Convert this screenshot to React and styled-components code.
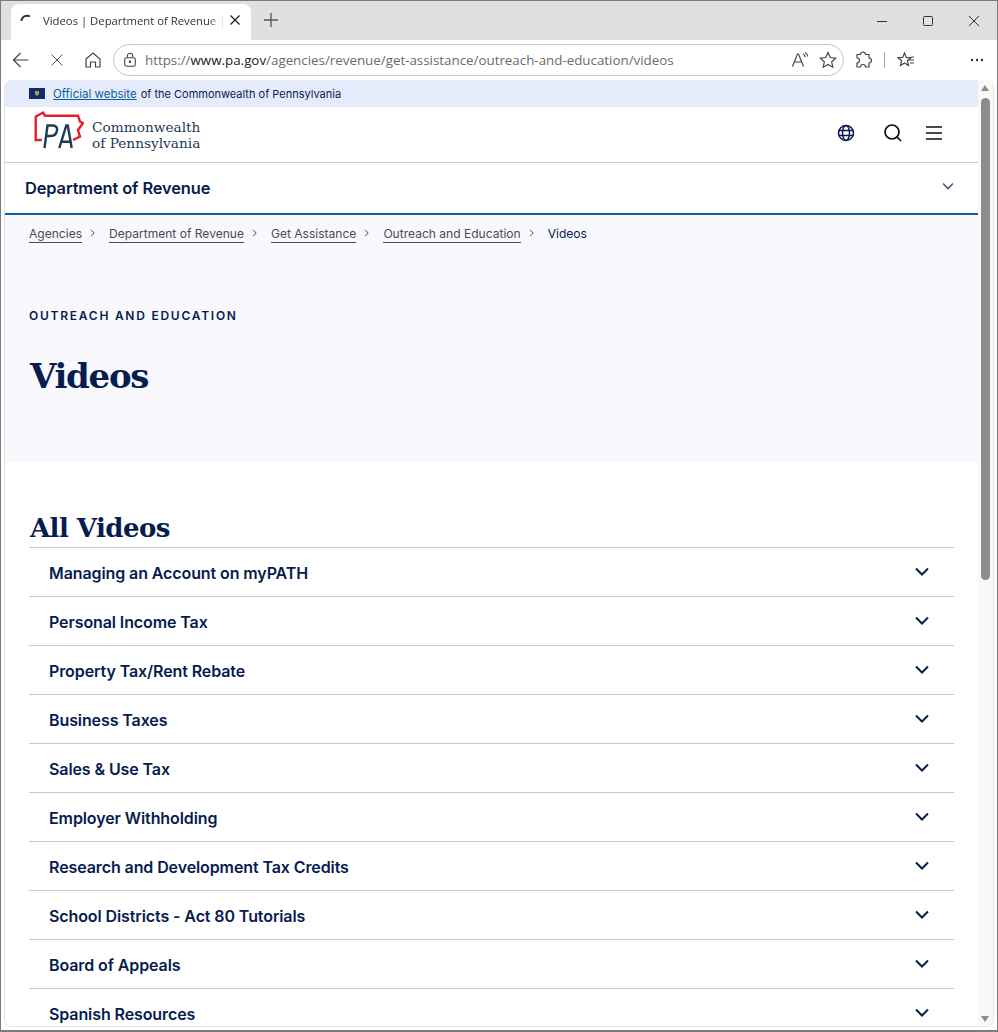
import React from "react";
import styled, { createGlobalStyle } from "styled-components";

const GlobalStyle = createGlobalStyle`
  html, body { margin: 0; padding: 0; background: #fff; }
  * { box-sizing: border-box; }
`;

const Frame = styled.div`
  width: 998px;
  height: 1032px;
  border: 1px solid #7b7b7b;
  border-bottom-width: 2px;
  background: #fff;
  display: flex;
  flex-direction: column;
  overflow: hidden;
  font-family: "Inter", "Liberation Sans", sans-serif;
`;

const TitleBar = styled.div`
  height: 39px;
  background: #e0e0e0;
  display: flex;
  align-items: flex-end;
  padding-left: 10px;
  flex: none;
`;

const Tab = styled.div`
  width: 240px;
  height: 36px;
  background: #fff;
  border-radius: 8px 8px 0 0;
  display: flex;
  align-items: center;
  padding: 0 10px 4px 8px;
  color: #333;
`;

const TabTitle = styled.span`
  flex: 1;
  margin-left: 8px;
  margin-right: 3px;
  font: 11.3px "Open Sans", "Liberation Sans", sans-serif;
  white-space: nowrap;
  overflow: hidden;
  mask-image: linear-gradient(to right, #000 90%, transparent);
`;

const NewTab = styled.div`
  margin-left: 12px;
  height: 36px;
  padding-bottom: 4px;
  display: flex;
  align-items: center;
`;

const WindowControls = styled.div`
  margin-left: auto;
  height: 39px;
  display: flex;
  align-items: center;
  gap: 30px;
  padding-right: 15px;
`;

const Toolbar = styled.div`
  height: 40px;
  flex: none;
  display: flex;
  align-items: center;
  padding-left: 10px;
  background: #fff;
`;

const ToolButton = styled.div`
  width: 20px;
  height: 20px;
  margin-right: ${(p) => p.$gap || 0}px;
  display: flex;
  align-items: center;
  justify-content: center;
  flex: none;
`;

const AddressBar = styled.div`
  width: 731px;
  height: 32px;
  border: 1px solid #c6c6c6;
  border-radius: 16px;
  display: flex;
  align-items: center;
  padding: 0 6px 0 8px;
  flex: none;
  margin-right: 9px;
`;

const Url = styled.span`
  margin-left: 7px;
  flex: 1;
  font: 13.35px "Open Sans", "Liberation Sans", sans-serif;
  color: #6b6b6b;
  white-space: nowrap;
  b { font-weight: 400; color: #222; }
`;

const AddressGap = styled.span`
  width: 10px;
  flex: none;
`;

const Divider = styled.div`
  width: 1px;
  height: 16px;
  background: #a9a9a9;
  margin: 0 11px;
  flex: none;
`;

const Viewport = styled.div`
  flex: 1;
  min-height: 0;
  margin: 0 3px 3px;
  display: flex;
  border: 1px solid #e4e4e4;
  border-top: 0;
  border-radius: 8px;
  overflow: hidden;
`;

const Page = styled.div`
  width: 973px;
  flex: none;
  overflow: hidden;
  color: #071c4f;
`;

const Scrollbar = styled.div`
  flex: 1;
  position: relative;
  background: #f8f8f8;
`;

const ScrollThumb = styled.div`
  position: absolute;
  top: 18px;
  left: 3px;
  width: 9px;
  height: 482px;
  border-radius: 5px;
  background: #8c8c8c;
`;

const ScrollArrow = styled.div`
  position: absolute;
  left: 3px;
  ${(p) => (p.$down ? "bottom: 4px;" : "top: 5px;")}
  width: 0;
  height: 0;
  border-left: 4.5px solid transparent;
  border-right: 4.5px solid transparent;
  ${(p) => (p.$down ? "border-top: 6px solid #8c8c8c;" : "border-bottom: 6px solid #8c8c8c;")}
`;

const Banner = styled.div`
  height: 27px;
  background: #e6ebfc;
  display: flex;
  align-items: center;
  padding-left: 24px;
  font-size: 11px;
  color: #071c4f;
`;

const OfficialLink = styled.a`
  margin: 0 4px 0 8px;
  font-size: 11.5px;
  color: #0a6299;
  text-decoration: underline;
`;

const Header = styled.header`
  height: 56px;
  border-bottom: 1px solid #c8c8d0;
  display: flex;
  align-items: center;
  padding: 0 35px 0 29px;
`;

const LogoMark = styled.svg`
  margin-bottom: 9px;
`;

const LogoText = styled.div`
  margin: 1px 0 0 8px;
  font: 13.7px/16px "DejaVu Serif", serif;
  color: #1f3a55;
  white-space: nowrap;
`;

const HeaderIcons = styled.div`
  margin: -3px 0 0 auto;
  display: flex;
  align-items: center;
`;

const HeaderIcon = styled.div`
  display: flex;
  margin-right: ${(p) => p.$gap || 0}px;
`;

const DeptBar = styled.div`
  height: 52px;
  border-bottom: 2px solid #0a6299;
  display: flex;
  align-items: center;
  justify-content: space-between;
  padding: 0 24px 0 20px;
  font-size: 16.4px;
  font-weight: 600;
  letter-spacing: -0.1px;
`;

const Hero = styled.section`
  height: 247px;
  background: #f8f8fd;
  padding: 9px 24px 0;
`;

const Crumbs = styled.nav`
  display: flex;
  align-items: center;
  height: 20px;
  font-size: 12.05px;
`;

const CrumbLink = styled.a`
  color: #4a4a5c;
  border-bottom: 1px solid #4a4a5c;
  line-height: 16px;
`;

const CrumbCurrent = styled.span`
  color: #071c4f;
  line-height: 16px;
`;

const CrumbSep = styled.span`
  width: 27px;
  padding-left: 8px;
  display: flex;
  margin-top: -3px;
`;

const Eyebrow = styled.div`
  margin-top: 64px;
  font-size: 12px;
  line-height: 16px;
  font-weight: 600;
  letter-spacing: 1.75px;
  text-transform: uppercase;
`;

const Title = styled.h1`
  margin: 30px 0 0 1px;
  font: 700 34px/44px "DejaVu Serif", serif;
  letter-spacing: -1.3px;
`;

const Main = styled.main`
  padding: 48px 24px 0;
`;

const SectionTitle = styled.h2`
  margin: 0 0 0 1px;
  font: 700 26px/37px "DejaVu Serif", serif;
  letter-spacing: -0.55px;
`;

const List = styled.div`
  border-top: 1px solid #c8c8d0;
`;

const Row = styled.div`
  height: 49px;
  border-bottom: 1px solid #c8c8d0;
  display: flex;
  align-items: center;
  justify-content: space-between;
  padding: 2px 25px 0 20px;
  font-size: 16px;
  font-weight: 600;
  letter-spacing: -0.1px;
`;

const RowChevron = styled.svg`
  margin-top: -3px;
`;

const DeptChevronMark = styled.svg`
  margin-top: -4px;
`;

const Chevron = () => (
  <RowChevron width="14" height="10" viewBox="0 0 14 10" fill="none">
    <path d="M1 1.5l6 6 6-6" stroke="#071c4f" strokeWidth="2" />
  </RowChevron>
);

const DeptChevron = () => (
  <DeptChevronMark width="12" height="8" viewBox="0 0 12 8" fill="none">
    <path d="M1 1.5l5 5 5-5" stroke="#4a5a75" strokeWidth="1.6" />
  </DeptChevronMark>
);

const SmallChevron = () => (
  <svg width="6" height="8" viewBox="0 0 6 8" fill="none">
    <path d="M1 .8L4.2 4 1 7.2" stroke="#4a4a5c" strokeWidth="1" />
  </svg>
);

const Stroke = ({ size = 18, sw = 1.2, color = "#444", children }) => (
  <svg width={size} height={size} viewBox="0 0 18 18" fill="none" stroke={color} strokeWidth={sw}>
    {children}
  </svg>
);

const Logo = () => (
  <LogoMark width="50" height="40" viewBox="0 0 50 40" fill="none">
    <path
      d="M7.7 30H1.7V6.6L9 2.5l2 3.2h33l2 6 3 1.3-5 7 2 6.7-7 3.3"
      stroke="#e2202c"
      strokeWidth="2.4"
    />
    <path d="M10.5 38l3-22.5h5c3.5 0 5 2 4.5 5-.6 3.5-3 5.5-6.5 5.5H12.5" stroke="#1f3a55" strokeWidth="2.4" />
    <path d="M25.3 38l7-22.5h1.5L37.7 38M27.5 31.7h9" stroke="#1f3a55" strokeWidth="2.4" />
  </LogoMark>
);

const Flag = () => (
  <svg width="16" height="11" viewBox="0 0 16 11">
    <rect width="16" height="11" fill="#14296b" />
    <path d="M6 3h4v3.5L8 8 6 6.500z" fill="#a89a4a" />
  </svg>
);

const videoTopics = [
  "Managing an Account on myPATH",
  "Personal Income Tax",
  "Property Tax/Rent Rebate",
  "Business Taxes",
  "Sales & Use Tax",
  "Employer Withholding",
  "Research and Development Tax Credits",
  "School Districts - Act 80 Tutorials",
  "Board of Appeals",
  "Spanish Resources",
];

const crumbs = ["Agencies", "Department of Revenue", "Get Assistance", "Outreach and Education"];

const App = () => (
  <Frame>
    <GlobalStyle />
    <TitleBar>
      <Tab>
        <svg width="16" height="16" viewBox="0 0 16 16" fill="none">
          <path d="M2.5 8C3.5 5 6.500 3.2 10 4" stroke="#333" strokeWidth="2.2" strokeLinecap="round" />
        </svg>
        <TabTitle>Videos | Department of Revenue | C</TabTitle>
        <svg width="12" height="12" viewBox="0 0 12 12" fill="none" stroke="#222" strokeWidth="1.3">
          <path d="M1.5 1.5l9 9M10.500 1.5l-9 9" />
        </svg>
      </Tab>
      <NewTab>
        <svg width="16" height="16" viewBox="0 0 16 16" fill="none" stroke="#555" strokeWidth="1.3">
          <path d="M8 1v14M1 8h14" />
        </svg>
      </NewTab>
      <WindowControls>
        <svg width="16" height="16" viewBox="0 0 16 16" fill="none" stroke="#333">
          <path d="M3 8.5h10" />
        </svg>
        <svg width="16" height="16" viewBox="0 0 16 16" fill="none" stroke="#333">
          <rect x="3.5" y="3.5" width="9" height="9" rx="1" />
        </svg>
        <svg width="16" height="16" viewBox="0 0 16 16" fill="none" stroke="#333">
          <path d="M3 3l10 10M13 3L3 13" />
        </svg>
      </WindowControls>
    </TitleBar>
    <Toolbar>
      <ToolButton $gap={16}>
        <Stroke>
          <path d="M16.5 9H1.5M8.5 2L1.5 9l7 7" />
        </Stroke>
      </ToolButton>
      <ToolButton $gap={16}>
        <Stroke size={14}>
          <path d="M2 2l14 14M16 2L2 16" />
        </Stroke>
      </ToolButton>
      <ToolButton $gap={10}>
        <Stroke>
          <path d="M2 8l7-6 7 6v8h-4.5v-5h-5v5H2z" />
        </Stroke>
      </ToolButton>
      <AddressBar>
        <Stroke size={16}>
          <rect x="3" y="6.5" width="12" height="9.5" rx="2" />
          <path d="M6 6.5V4.5a3 3 0 016 0v2" />
          <circle cx="9" cy="11" r=".8" fill="#444" />
        </Stroke>
        <Url>
          https://<b>www.pa.gov</b>/agencies/revenue/get-assistance/outreach-and-education/videos
        </Url>
        <Stroke>
          <path d="M1.5 15.5L6.5 3h1l5 12.5M3.5 11h7" />
          <path d="M12 3c1.2.5 2 1.5 2.2 3M14 1.5c1.5.7 2.5 2 2.8 4" />
        </Stroke>
        <AddressGap />
        <Stroke>
          <path d="M9 1.5l2.3 5 5.4.6-4 3.7 1.1 5.4L9 13.5l-4.8 2.7 1.1-5.4-4-3.7 5.4-.6z" />
        </Stroke>
      </AddressBar>
      <ToolButton>
        <Stroke>
          <path d="M6.5 3.5a2.5 2.5 0 015 0h3.5v3.5a2.5 2.5 0 010 5V16h-3.5a2.5 2.5 0 00-5 0H3v-4a2.5 2.5 0 000-5V3.5z" />
        </Stroke>
      </ToolButton>
      <Divider />
      <ToolButton $gap={51}>
        <Stroke>
          <path d="M7.5 2l1.8 4.4 4.7.4-3.6 3 1.1 4.6-4-2.5-4 2.5 1.1-4.6-3.6-3 4.7-.4zM12 9h5M13 12h4M14.5 6H17" />
        </Stroke>
      </ToolButton>
      <ToolButton>
        <svg width="14" height="4" viewBox="0 0 14 4" fill="#333">
          <circle cx="2" cy="2" r="1.2" />
          <circle cx="7" cy="2" r="1.2" />
          <circle cx="12" cy="2" r="1.2" />
        </svg>
      </ToolButton>
    </Toolbar>
    <Viewport>
      <Page>
        <Banner>
          <Flag />
          <OfficialLink>Official website</OfficialLink>
          of the Commonwealth of Pennsylvania
        </Banner>
        <Header>
          <Logo />
          <LogoText>
            Commonwealth
            <br />
            of Pennsylvania
          </LogoText>
          <HeaderIcons>
            <HeaderIcon $gap={28}>
              <svg width="18" height="18" viewBox="0 0 18 18" fill="none" stroke="#071c4f" strokeWidth="1.5">
                <circle cx="9" cy="9" r="7.5" />
                <ellipse cx="9" cy="9" rx="3.5" ry="7.5" />
                <path d="M1.5 6.5h15M1.5 11.5h15" />
              </svg>
            </HeaderIcon>
            <HeaderIcon $gap={22}>
              <svg width="20" height="20" viewBox="0 0 20 20" fill="none" stroke="#111" strokeWidth="1.7">
                <circle cx="9" cy="9" r="7" />
                <path d="M14 14l4 4" />
              </svg>
            </HeaderIcon>
            <HeaderIcon>
              <svg width="18" height="18" viewBox="0 0 18 18" fill="none" stroke="#111" strokeWidth="1.7">
                <path d="M1 3h16M1 9h16M1 15h16" />
              </svg>
            </HeaderIcon>
          </HeaderIcons>
        </Header>
        <DeptBar>
          Department of Revenue
          <DeptChevron />
        </DeptBar>
        <Hero>
          <Crumbs>
            {crumbs.map((c) => (
              <React.Fragment key={c}>
                <CrumbLink>{c}</CrumbLink>
                <CrumbSep>
                  <SmallChevron />
                </CrumbSep>
              </React.Fragment>
            ))}
            <CrumbCurrent>Videos</CrumbCurrent>
          </Crumbs>
          <Eyebrow>Outreach and Education</Eyebrow>
          <Title>Videos</Title>
        </Hero>
        <Main>
          <SectionTitle>All Videos</SectionTitle>
          <List>
            {videoTopics.map((t) => (
              <Row key={t}>
                {t}
                <Chevron />
              </Row>
            ))}
          </List>
        </Main>
      </Page>
      <Scrollbar>
        <ScrollArrow />
        <ScrollThumb />
        <ScrollArrow $down />
      </Scrollbar>
    </Viewport>
  </Frame>
);

export default App;
